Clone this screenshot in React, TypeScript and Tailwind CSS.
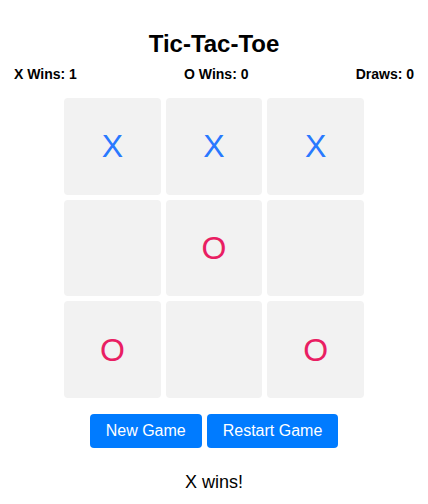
const board = ["X", "X", "X", "", "O", "", "O", "", "O"];

const App = () => {
  return (
    <div className="flex flex-col items-center pt-[30px] font-['Liberation_Sans',Arial,sans-serif] text-black">
      {/* Title */}
      <h1 className="text-[24px] leading-[28px] font-bold">Tic-Tac-Toe</h1>

      {/* Scoreboard */}
      <div className="mt-[8px] w-[400px] flex justify-between text-[14px] leading-[16px] font-bold">
        <span>X Wins: 1</span>
        <span>O Wins: 0</span>
        <span>Draws: 0</span>
      </div>

      {/* Board */}
      <div className="mt-4 grid grid-cols-3 gap-[5px] w-[300px]">
        {board.map((cell, index) => (
          <div
            key={index}
            className={`aspect-square bg-[#f2f2f2] rounded flex items-center justify-center text-[32px] leading-none ${
              cell === "X" ? "text-[#2979ff]" : "text-[#e91e63]"
            }`}
          >
            {cell}
          </div>
        ))}
      </div>

      {/* Controls */}
      <div className="mt-4 flex gap-[5px]">
        <button className="px-4 py-2 text-[16px] leading-[18px] text-white bg-[#007bff] rounded">
          New Game
        </button>
        <button className="px-4 py-2 text-[16px] leading-[18px] text-white bg-[#007bff] rounded">
          Restart Game
        </button>
      </div>

      <p className="mt-[24px] text-[18px] leading-[20px]">X wins!</p>
    </div>
  );
};

export default App;
